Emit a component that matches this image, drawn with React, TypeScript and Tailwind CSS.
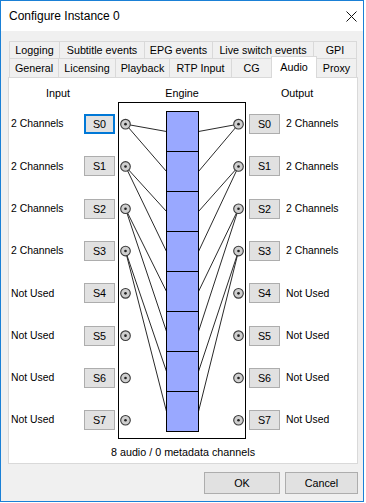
const topTabs = [
  { label: 'Logging', w: 'w-[50px]' },
  { label: 'Subtitle events', w: 'w-[85px]' },
  { label: 'EPG events', w: 'w-[68px]' },
  { label: 'Live switch events', w: 'w-[101px]' },
  { label: 'GPI', w: 'w-[44px] border-r' },
]

const bottomTabs = [
  { label: 'General', w: 'w-[49px]' },
  { label: 'Licensing', w: 'w-[57px]' },
  { label: 'Playback', w: 'w-[54px]' },
  { label: 'RTP Input', w: 'w-[62px]' },
  { label: 'CG', w: 'w-[40px]' },
]

const inputs = ['2 Channels', '2 Channels', '2 Channels', '2 Channels', 'Not Used', 'Not Used', 'Not Used', 'Not Used']
const outputs = inputs

// row centres inside the engine box (svg coords)
const rowY = (i: number) => 21.15 + 42.3 * i
const chY = (ch: number) => 28.5 + 40 * ch

function Socket({ x, y }: { x: number; y: number }) {
  return (
    <g>
      <circle cx={x} cy={y} r={4.8} fill="#cfcfcf" stroke="#3a3a3a" strokeWidth={1.1} />
      <circle cx={x} cy={y} r={1.3} fill="#222" />
    </g>
  )
}

function EngineDiagram() {
  const routed = [0, 1, 2, 3]
  return (
    <svg width={126} height={335} viewBox="0 0 126 335" className="block">
      {routed.map((s) =>
        [2 * s, 2 * s + 1].map((ch) => (
          <g key={`${s}-${ch}`} stroke="#2a2a2a" strokeWidth={1}>
            <line x1={6.5} y1={rowY(s)} x2={47.5} y2={chY(ch)} />
            <line x1={119.5} y1={rowY(s)} x2={79.5} y2={chY(ch)} />
          </g>
        )),
      )}
      {Array.from({ length: 8 }).map((_, i) => (
        <rect key={i} x={47.5} y={8.5 + 40 * i} width={32} height={40} fill="#99a8ff" stroke="#000" strokeWidth={1} />
      ))}
      {Array.from({ length: 8 }).map((_, i) => (
        <g key={i}>
          <Socket x={6.5} y={rowY(i)} />
          <Socket x={119.5} y={rowY(i)} />
        </g>
      ))}
    </svg>
  )
}

function SmallButton({ label, focused }: { label: string; focused?: boolean }) {
  return (
    <div
      className={`w-[31px] h-[20px] flex items-center justify-center bg-[#e1e1e1] ${
        focused ? 'border-2 border-[#0078d7]' : 'border border-[#adadad]'
      }`}
    >
      {label}
    </div>
  )
}

export default function App() {
  return (
    <div className="w-[366px] h-[503px] bg-white text-black" style={{ fontFamily: '"Liberation Sans", Arial, sans-serif' }}>
      <div className="w-[364px] h-[502px] border border-[#1a80d6] bg-[#f0f0f0] flex flex-col">
        {/* Title bar */}
        <div className="h-[30px] bg-white flex items-center justify-between pl-[8px] pr-[6px]">
          <span className="text-[12px]">Configure Instance 0</span>
          <svg width="11" height="11" viewBox="0 0 11 11" className="mt-[1px]">
            <path d="M0.5 0.5L10.5 10.5M10.5 0.5L0.5 10.5" stroke="#111" strokeWidth={1} />
          </svg>
        </div>

        <div className="pl-[7px] pt-[10px] text-[10.75px]">
          {/* Tabs */}
          <div className="ml-[1px] flex h-[17px]">
            {topTabs.map((t) => (
              <div
                key={t.label}
                className={`${t.w} h-full border-t border-l border-[#d9d9d9] flex items-center justify-center leading-none`}
              >
                {t.label}
              </div>
            ))}
          </div>
          <div className="ml-[1px] flex items-end h-[19px]">
            {bottomTabs.map((t) => (
              <div
                key={t.label}
                className={`${t.w} h-full border-t border-l border-[#d9d9d9] flex items-center justify-center leading-none pt-[1px]`}
              >
                {t.label}
              </div>
            ))}
            <div className="relative z-10 w-[46px] h-[22px] mb-[-1px] bg-white border-t border-x border-[#d9d9d9] flex items-center justify-center leading-none pb-[1px]">
              Audio
            </div>
            <div className="w-[40px] h-full border-t border-r border-[#d9d9d9] flex items-center justify-center leading-none pt-[1px]">
              Proxy
            </div>
          </div>

          {/* Panel */}
          <div className="w-[350px] h-[387px] bg-white border border-[#d9d9d9] flex flex-col">
            <div className="flex h-[24px] pt-[8px] leading-[14px]">
              <div className="w-[109px] pl-[37px]">Input</div>
              <div className="w-[128px] text-center">Engine</div>
              <div className="flex-1 pl-[35px]">Output</div>
            </div>

            <div className="flex h-[337px]">
              <div className="w-[109px] pt-[1px] flex flex-col">
                {inputs.map((label, i) => (
                  <div key={i} className="h-[42.3px] shrink-0 flex items-center">
                    <span className="pl-[2px] text-[10.4px] flex-1">{label}</span>
                    <div className="mr-[3px]">
                      <SmallButton label={`S${i}`} focused={i === 0} />
                    </div>
                  </div>
                ))}
              </div>
              <div className="w-[128px] h-[337px] border border-black">
                <EngineDiagram />
              </div>
              <div className="flex-1 pt-[1px] flex flex-col">
                {outputs.map((label, i) => (
                  <div key={i} className="h-[42.3px] shrink-0 flex items-center">
                    <div className="ml-[3px]">
                      <SmallButton label={`S${i}`} />
                    </div>
                    <span className="ml-[6px] text-[10.4px]">{label}</span>
                  </div>
                ))}
              </div>
            </div>

            <div className="pt-[6px] leading-[14px] text-center">8 audio / 0 metadata channels</div>
          </div>

          {/* Dialog buttons */}
          <div className="w-[350px] mt-[8px] flex justify-end gap-[5px]">
            <button className="w-[76px] h-[22px] bg-[#e1e1e1] border border-[#adadad]">OK</button>
            <button className="w-[73px] h-[22px] bg-[#e1e1e1] border border-[#adadad]">Cancel</button>
          </div>
        </div>
      </div>
    </div>
  )
}
